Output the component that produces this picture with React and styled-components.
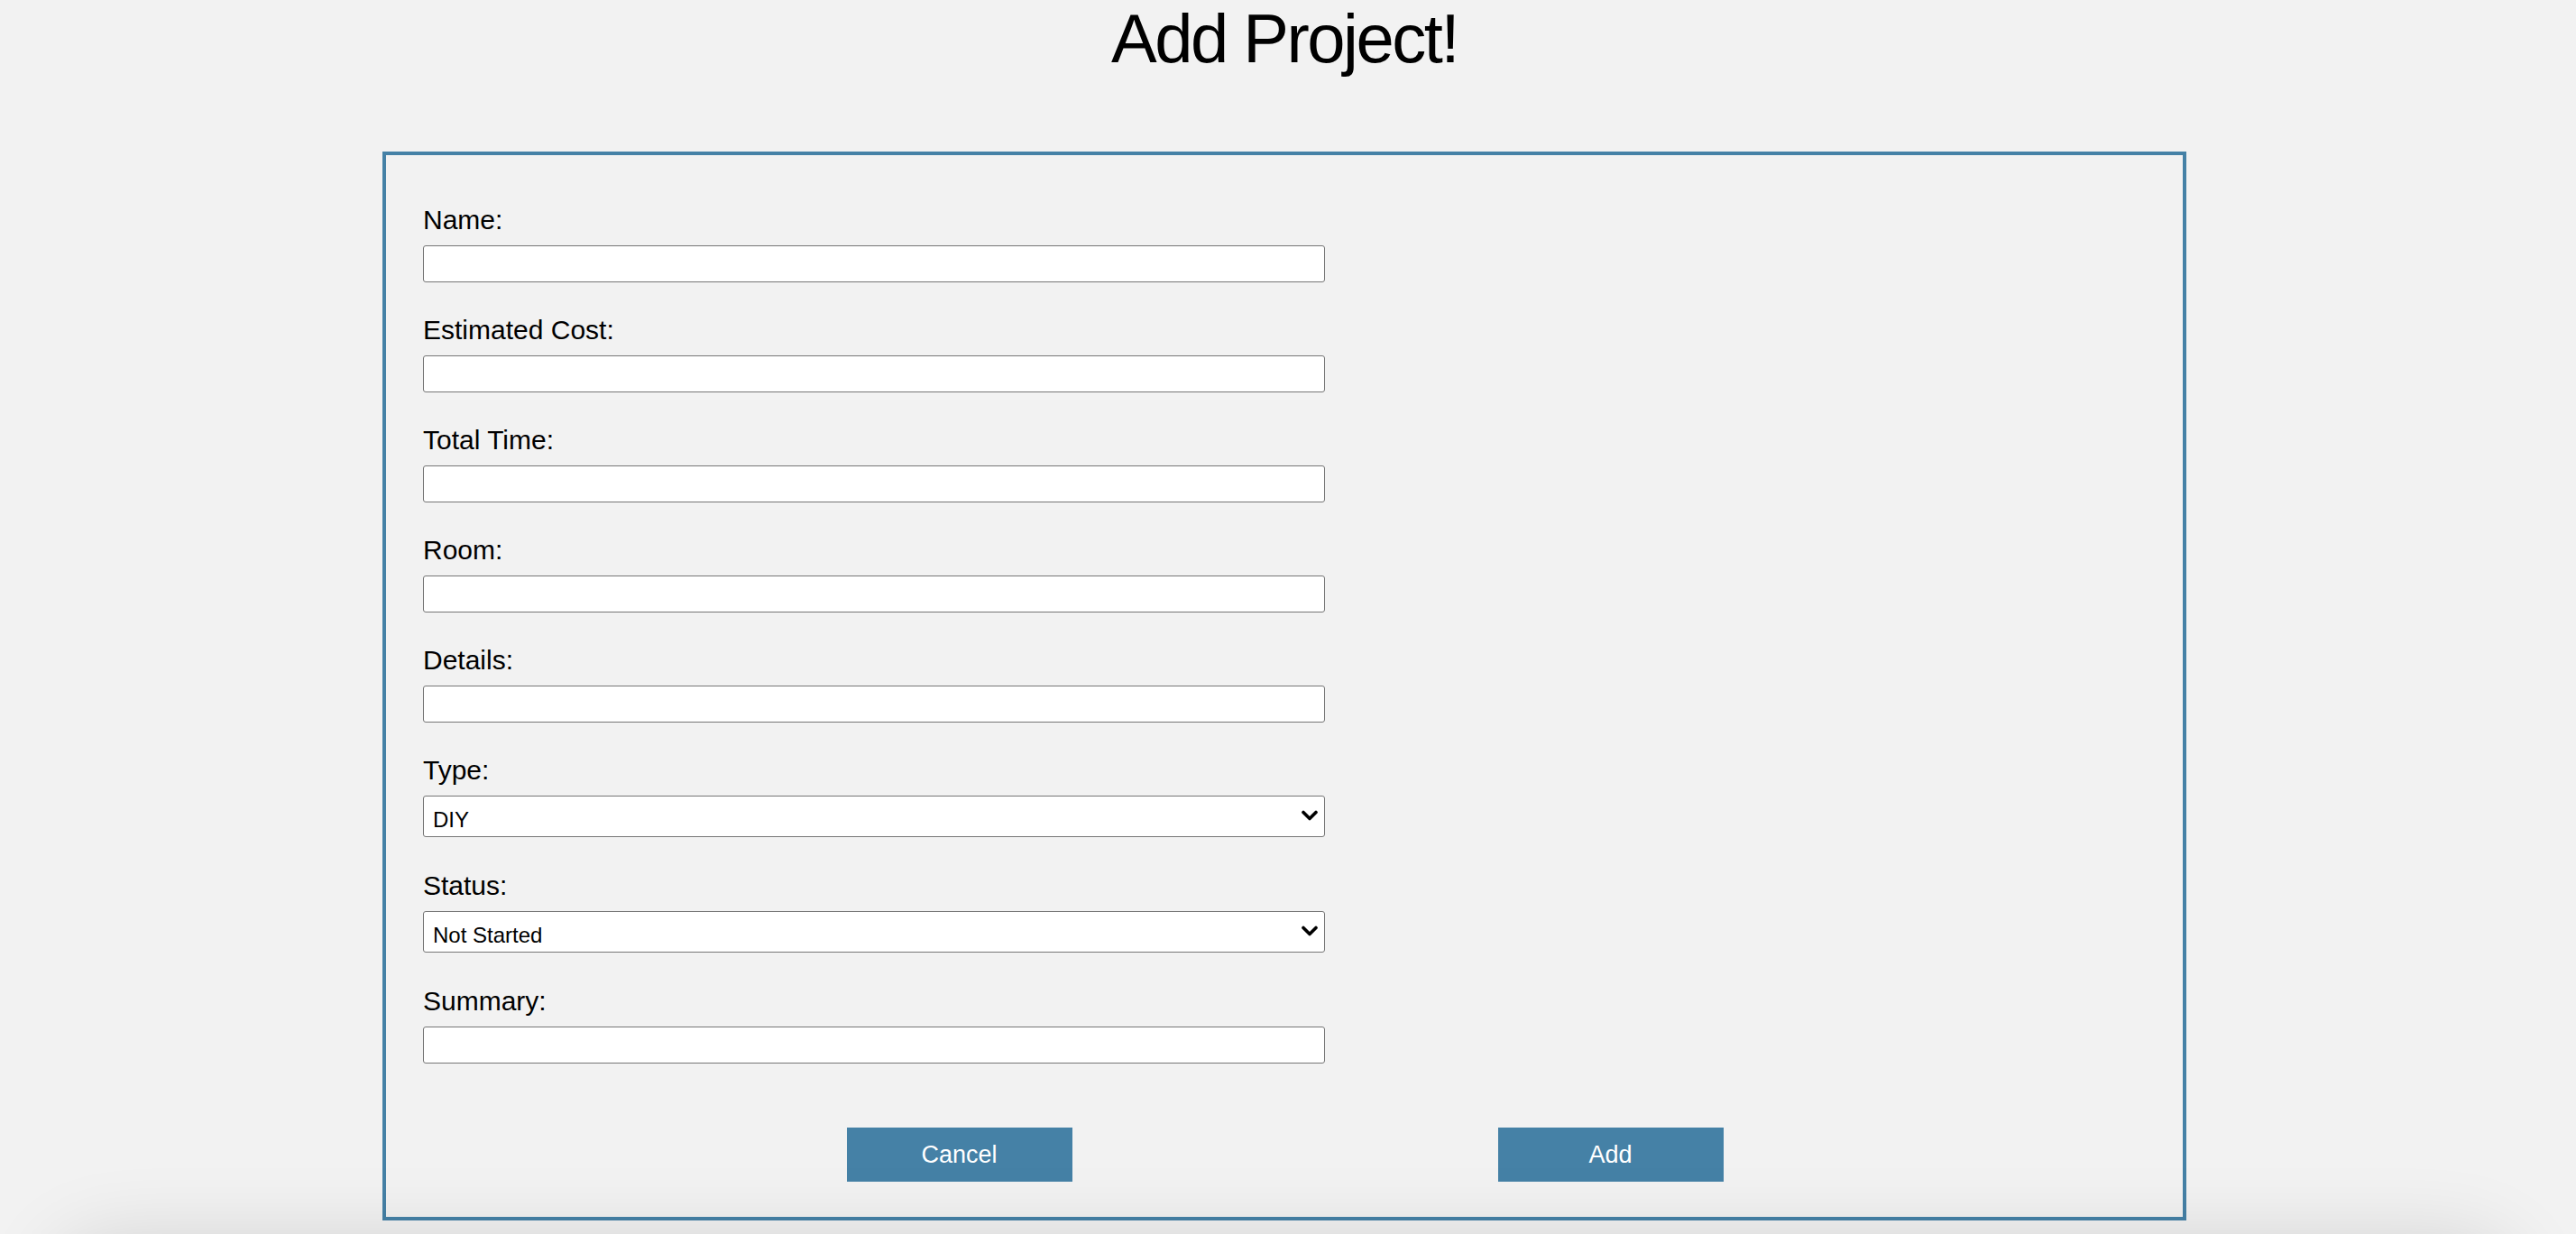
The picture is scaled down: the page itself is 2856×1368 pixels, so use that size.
import React from "react";
import styled, { createGlobalStyle } from "styled-components";

const fields = [
  { label: "Name:" },
  { label: "Estimated Cost:" },
  { label: "Total Time:" },
  { label: "Room:" },
  { label: "Details:" },
  { label: "Type:", options: ["DIY", "Contractor"] },
  { label: "Status:", options: ["Not Started", "In Progress", "Completed"] },
  { label: "Summary:" },
];

const App = () => {
  return (
    <Page>
      <GlobalStyle />
      <Title>Add Project!</Title>
      <Frame>
        {fields.map((f) => (
          <Field key={f.label} $select={!!f.options}>
            <Label>{f.label}</Label>
            {f.options ? (
              <SelectWrap>
                <Select defaultValue={f.options[0]}>
                  {f.options.map((o) => (
                    <option key={o}>{o}</option>
                  ))}
                </Select>
                <Chevron viewBox="0 0 18 12" aria-hidden="true">
                  <path
                    d="M2 2.5 L9 9.5 L16 2.5"
                    fill="none"
                    stroke="#000"
                    strokeWidth="3.6"
                    strokeLinecap="round"
                    strokeLinejoin="round"
                  />
                </Chevron>
              </SelectWrap>
            ) : (
              <Input type="text" />
            )}
          </Field>
        ))}
        <Buttons>
          <Button type="button">Cancel</Button>
          <Button type="submit">Add</Button>
        </Buttons>
      </Frame>
      <Footer />
    </Page>
  );
};

const GlobalStyle = createGlobalStyle`
  html, body {
    margin: 0;
    padding: 0;
    background: #f2f2f2;
  }
  body {
    font-family: "Liberation Sans", Arial, sans-serif;
    color: #000;
  }
`;

const Page = styled.div`
  display: flex;
  flex-direction: column;
  align-items: center;
  padding-right: 8px;
  overflow: hidden;
`;

const Title = styled.h1`
  margin: 5px 0 87px;
  font-size: 76px;
  line-height: 76px;
  font-weight: 400;
  letter-spacing: -2.5px;
`;

const Frame = styled.form`
  box-sizing: border-box;
  width: 2000px;
  border: 4px solid #4581a6;
  padding: 54px 40px 39px 41px;
`;

const Field = styled.div`
  display: flex;
  flex-direction: column;
  align-items: flex-start;
  margin-bottom: ${(p) => (p.$select ? "36px" : "35px")};
`;

const Label = styled.label`
  font-size: 30px;
  line-height: 36px;
  margin-bottom: 10px;
`;

const Input = styled.input`
  box-sizing: border-box;
  width: 1000px;
  height: 41px;
  border: 1px solid #767676;
  border-radius: 3px;
  background: #fff;
  font-family: "Liberation Sans", Arial, sans-serif;
  font-size: 22px;
`;

const SelectWrap = styled.div`
  position: relative;
  width: 1000px;
`;

const Select = styled.select`
  appearance: none;
  -webkit-appearance: none;
  display: block;
  box-sizing: border-box;
  width: 1000px;
  height: 46px;
  padding: 7px 40px 0 10px;
  border: 1px solid #767676;
  border-radius: 3px;
  background: #fff;
  color: #000;
  font-family: "Liberation Sans", Arial, sans-serif;
  font-size: 24px;
`;

const Chevron = styled.svg`
  position: absolute;
  right: 8px;
  top: 16px;
  width: 18px;
  height: 12px;
  pointer-events: none;
`;

const Buttons = styled.div`
  display: flex;
  justify-content: center;
  gap: 472px;
  margin-top: 71px;
`;

const Button = styled.button`
  width: 250px;
  height: 60px;
  border: none;
  border-radius: 0;
  background: #4581a6;
  color: #fff;
  font-family: "Liberation Sans", Arial, sans-serif;
  font-size: 27px;
  padding: 0;
`;

const Footer = styled.div`
  align-self: stretch;
  margin: 24px 60px 0;
  height: 120px;
  border-radius: 60px;
  background: #f2f2f2;
  box-shadow: 0 0 90px rgba(0, 0, 0, 0.14);
`;

export default App;
